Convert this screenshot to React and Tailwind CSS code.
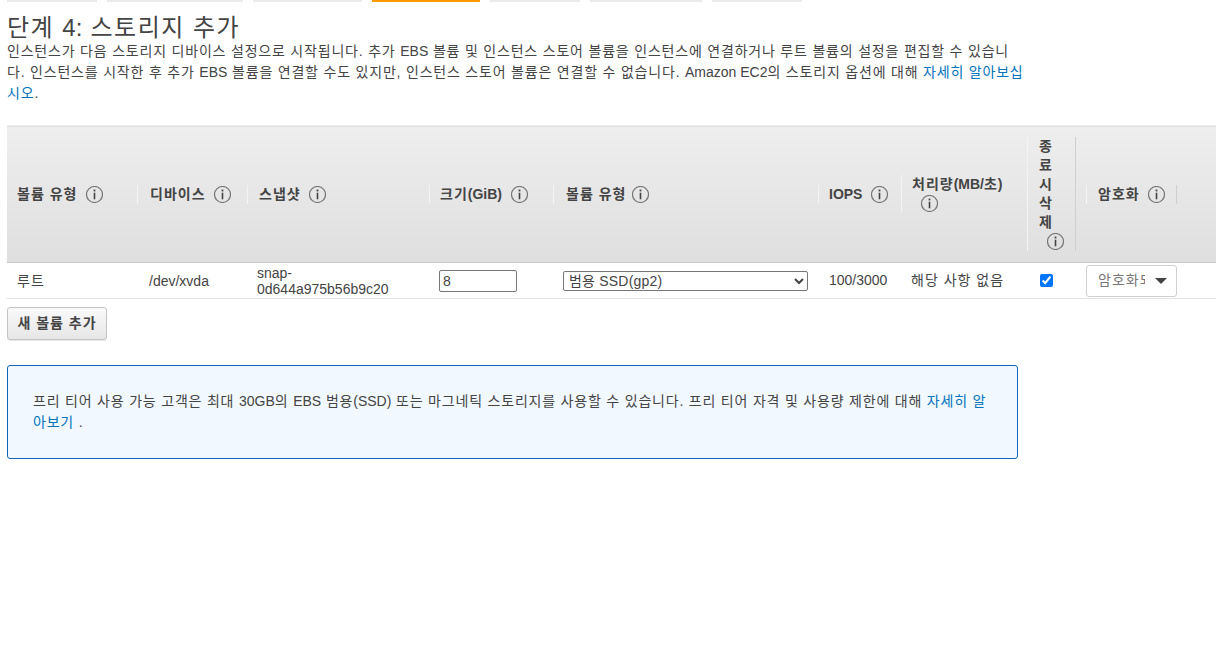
import { useState } from 'react';

const tabs = [
    { w: 'w-[90px]' },
    { w: 'w-[136px]' },
    { w: 'w-[109px]' },
    { w: 'w-[108px]', active: true },
    { w: 'w-[90px]' },
    { w: 'w-[112px]' },
    { w: 'w-[90px]' },
];

// latin runs keep normal spacing, the hangul around them is set wider
function L({ children }) {
    return <span className="tracking-normal">{children}</span>;
}

function InfoIcon({ className = '' }) {
    return (
        <svg viewBox="0 0 17 17" className={`w-[17px] h-[17px] shrink-0 ${className}`}>
            <circle cx="8.5" cy="8.5" r="8" fill="none" stroke="#777777" strokeWidth="1.2" />
            <rect x="7.6" y="3.6" width="1.8" height="1.8" fill="#444" />
            <rect x="7.7" y="6.7" width="1.6" height="6.6" fill="#444" />
        </svg>
    );
}

function HeaderCell({ label, sep = true, gap = 'ml-[8px]', pad = 'pl-[10px]' }) {
    return (
        <th className="p-0 align-middle text-left font-bold">
            <div className={`flex items-center h-[19px] ${pad} ${sep ? 'border-l border-[#f4f4f4]' : ''}`}>
                <span className="whitespace-nowrap">{label}</span>
                <InfoIcon className={gap} />
            </div>
        </th>
    );
}

export default function App() {
    const [size, setSize] = useState('8');
    const [checked, setChecked] = useState(true);

    return (
        <div className="min-h-[647px] bg-white px-[7px] text-[14px] tracking-[1px] text-[#444] font-[family-name:'Liberation_Sans','Noto_Sans_CJK_KR',sans-serif]">
            <div className="flex gap-[10px]">
                {tabs.map((tab, index) => (
                    <div
                        key={index}
                        className={`h-[2px] ${tab.w} ${tab.active ? 'bg-[#ff9900]' : 'bg-[#eaeaea]'}`}
                    ></div>
                ))}
            </div>

            <h1 className="mt-[11px] text-[24px] leading-[30px] font-normal tracking-[1.5px]">
                단계 <L>4:</L> 스토리지 추가
            </h1>
            <p className="w-[1018px] leading-[21px] mt-[-2px] tracking-[0.8px]">
                인스턴스가 다음 스토리지 디바이스 설정으로 시작됩니다. 추가 <L>EBS</L> 볼륨 및 인스턴스 스토어 볼륨을
                인스턴스에 연결하거나 루트 볼륨의 설정을 편집할 수 있습니다. 인스턴스를 시작한 후 추가 <L>EBS</L> 볼륨을
                연결할 수도 있지만, 인스턴스 스토어 볼륨은 연결할 수 없습니다. <L>Amazon EC2</L>의 스토리지 옵션에 대해{' '}
                <a className="text-[#0073bb]">자세히 알아보십시오</a>.
            </p>

            <table className="mt-[21px] w-[1209px] table-fixed border-collapse">
                <colgroup>
                    <col className="w-[130px]" />
                    <col className="w-[110px]" />
                    <col className="w-[182px]" />
                    <col className="w-[124px]" />
                    <col className="w-[265px]" />
                    <col className="w-[83px]" />
                    <col className="w-[126px]" />
                    <col className="w-[59px]" />
                    <col className="w-[91px]" />
                    <col />
                </colgroup>
                <thead>
                    <tr className="h-[137px] border-y border-t-[#eeeeee] border-b-[#c6c6c6] bg-gradient-to-b from-[#eeeeee] to-[#dfdfdf]">
                        <HeaderCell label="볼륨 유형" sep={false} gap="ml-[9px]" />
                        <HeaderCell label="디바이스" pad="pl-[12px]" />
                        <HeaderCell label="스냅샷" pad="pl-[11px]" />
                        <HeaderCell label={<>크기<L>(GiB)</L></>} gap="ml-[9px]" />
                        <HeaderCell label="볼륨 유형" pad="pl-[12px]" gap="ml-[6px]" />
                        <HeaderCell label={<L>IOPS</L>} gap="ml-[9px]" />
                        <th className="p-0 align-middle text-left font-bold">
                            <div className="h-[38px] pl-[10px] border-l border-[#f4f4f4] leading-[19px]">
                                <div className="whitespace-nowrap">처리량<L>(MB/</L>초<L>)</L></div>
                                <InfoIcon className="ml-[9px] mt-[1px]" />
                            </div>
                        </th>
                        <th className="p-0 align-middle text-left font-bold">
                            <div className="h-[114px] w-[49px] pl-[11px] border-x border-l-[#f4f4f4] border-r-[#cfcfcf] leading-[19px]">
                                <div className="w-[20px] break-all">종료 시 삭제</div>
                                <InfoIcon className="ml-[8px] mt-[1px]" />
                            </div>
                        </th>
                        <th className="p-0 align-middle text-left font-bold">
                            <div className="flex items-center h-[19px] pl-[11px] border-x border-l-[#f4f4f4] border-r-[#cfcfcf]">
                                <span className="whitespace-nowrap">암호화</span>
                                <InfoIcon className="ml-[8px]" />
                            </div>
                        </th>
                        <th className="p-0"></th>
                    </tr>
                </thead>
                <tbody>
                    <tr className="h-[36px] border-b border-[#e3e3e3]">
                        <td className="p-0 pl-[10px] pt-[1px]">루트</td>
                        <td className="p-0 pl-[12px] pt-[1px]"><L>/dev/xvda</L></td>
                        <td className="p-0 pl-[10px] leading-[16px] tracking-normal">
                            <div className="w-[150px]">snap-0d644a975b56b9c20</div>
                        </td>
                        <td className="p-0 pl-[10px]">
                            <input
                                type="text"
                                value={size}
                                onChange={(e) => setSize(e.target.value)}
                                className="block w-[78px] h-[22px] px-[3px] border border-[#767676] rounded-[2px]"
                            />
                        </td>
                        <td className="p-0 pl-[10px]">
                            <select className="block w-[245px] h-[20px] border border-[#767676] rounded-[2px] pl-[1px] bg-white tracking-[0.2px]">
                                <option>범용 SSD(gp2)</option>
                            </select>
                        </td>
                        <td className="p-0 pl-[11px]"><L>100/3000</L></td>
                        <td className="p-0 pl-[10px] whitespace-nowrap">해당 사항 없음</td>
                        <td className="p-0 pl-[13px]">
                            <input
                                type="checkbox"
                                checked={checked}
                                onChange={(e) => setChecked(e.target.checked)}
                                className="block w-[13px] h-[13px]"
                            />
                        </td>
                        <td className="p-0">
                            <div className="flex items-center h-[32px] w-[91px] pl-[11px] border border-[#d0d0d0] rounded-[3px] bg-white text-[#777]">
                                <span className="w-[47px] overflow-hidden whitespace-nowrap">암호화되지 않음</span>
                                <span className="ml-[10px] w-0 h-0 border-x-[6px] border-t-[6px] border-x-transparent border-t-[#444]"></span>
                            </div>
                        </td>
                        <td className="p-0"></td>
                    </tr>
                </tbody>
            </table>

            <button className="block mt-[8px] w-[100px] h-[33px] border border-[#c4c4c4] rounded-[3px] bg-gradient-to-b from-[#fafafa] to-[#e6e6e6] font-bold text-[#444] shadow-[0_1px_1px_rgba(0,0,0,0.1)]">
                새 볼륨 추가
            </button>

            <div className="mt-[25px] w-[1011px] h-[94px] flex items-center px-[25px] border border-[#1166bb] rounded-[3px] bg-[#f1f8ff] leading-[21px] tracking-[0.8px]">
                <p className="-mt-[1px]">
                    프리 티어 사용 가능 고객은 최대 <L>30GB</L>의 <L>EBS</L> 범용<L>(SSD)</L> 또는 마그네틱 스토리지를 사용할 수
                    있습니다. 프리 티어 자격 및 사용량 제한에 대해 <a className="text-[#0073bb]">자세히 알아보기</a> .
                </p>
            </div>
        </div>
    );
}
